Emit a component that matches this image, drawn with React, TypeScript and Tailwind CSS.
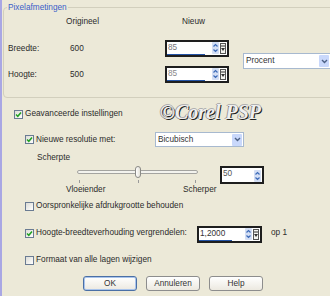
import React from "react";

function Check({ checked }: { checked?: boolean }) {
  return (
    <div className="flex h-[9px] w-[9px] shrink-0 items-center justify-center border border-[#6a7b92] bg-gradient-to-br from-[#dcdcd6] to-white">
      {checked && (
        <svg width="7" height="7" viewBox="0 0 7 7">
          <polyline points="1,3.5 2.8,5.3 6,1.5" fill="none" stroke="#21a121" strokeWidth="1.5" />
        </svg>
      )}
    </div>
  );
}

function Arrows() {
  return (
    <div className="flex h-[12px] w-[7px] shrink-0 items-center justify-center rounded-[1px] bg-[#d3def4]">
      <svg width="7" height="12" viewBox="0 0 7 12">
        <polyline points="1.5,4.5 3.5,2.5 5.5,4.5" fill="none" stroke="#3d6bb8" strokeWidth="1.2" />
        <polyline points="1.5,7.5 3.5,9.5 5.5,7.5" fill="none" stroke="#3d6bb8" strokeWidth="1.2" />
      </svg>
    </div>
  );
}

function Extra() {
  return (
    <div className="ml-[1px] flex h-[11px] w-[6px] shrink-0 items-center justify-center border border-[#555] bg-[#f4f4f0]">
      <svg width="4" height="8" viewBox="0 0 4 8">
        <line x1="0" y1="2" x2="4" y2="2" stroke="#333" strokeWidth="1" />
        <polygon points="0,4 4,4 2,7" fill="#333" />
      </svg>
    </div>
  );
}

function Spin({ value, color, cls, bar }: { value: string; color: string; cls: string; bar: string }) {
  return (
    <div className={"flex flex-col border-2 border-[#1e1e1e] bg-white " + cls}>
      <div className="flex flex-1 items-center pl-[1px] pr-[1px]">
        <span className={"flex-1 " + color}>{value}</span>
        <Arrows />
        <Extra />
      </div>
      <div className={"h-[2px] bg-[#2353a6] " + bar} />
    </div>
  );
}

function Dropdown({ text, cls }: { text: string; cls: string }) {
  return (
    <div className={"flex items-center border border-[#a7b9cf] bg-white pl-[2px] pr-[1px] " + cls}>
      <span className="flex-1 text-[#333]">{text}</span>
      <div className="flex h-[12px] w-[10px] items-center justify-center rounded-[1px] bg-[#c9d8fb]">
        <svg width="7" height="5" viewBox="0 0 7 5">
          <polyline points="1,1 3.5,3.5 6,1" fill="none" stroke="#4d6185" strokeWidth="1.4" />
        </svg>
      </div>
    </div>
  );
}

function Btn({ label, def }: { label: string; def?: boolean }) {
  return (
    <div
      className={
        "flex h-[15px] w-[54px] items-center justify-center rounded-[3px] border bg-gradient-to-b from-white to-[#ece9e0] text-[#333] " +
        (def ? "border-[#4a6fa5] shadow-[inset_0_0_0_1px_#a9c4ec]" : "border-[#8d8d8d]")
      }
    >
      {label}
    </div>
  );
}

export default function App() {
  return (
    <div className="relative h-[296px] w-[330px] overflow-hidden border-l-2 border-[#a9a7e4] bg-[#ece9d8] font-['Liberation_Sans',Arial,sans-serif] text-[8.25px] leading-[10px] text-[#2b2b2b]">
      {/* Group box */}
      <div className="relative ml-[1px] mt-[7px] h-[91px] w-[345px] rounded-[4px] border border-[#d2cfbd]">
        <span className="absolute left-[3px] top-[-6px] bg-[#ece9d8] px-[1px] leading-[11px] text-[#3a5ec8]">
          Pixelafmetingen
        </span>
        <div className="flex pl-[4px] pt-[8px]">
          <div className="flex w-[221px] flex-col">
            <div className="flex h-[12px] items-center">
              <span className="w-[58px]" />
              <span className="w-[99px]">Origineel</span>
              <span className="pl-[17px]">Nieuw</span>
            </div>
            <div className="mt-[12px] flex h-[17px] items-center">
              <span className="w-[58px]">Breedte:</span>
              <span className="w-[99px] pl-[4px]">600</span>
              <Spin value="85" color="text-[#777]" cls="h-[17px] w-[64px]" bar="w-[38px]" />
            </div>
            <div className="mt-[9px] flex h-[17px] items-center">
              <span className="w-[58px]">Hoogte:</span>
              <span className="w-[99px] pl-[4px]">500</span>
              <Spin value="85" color="text-[#888]" cls="h-[17px] w-[64px]" bar="w-[38px]" />
            </div>
          </div>
          <div className="ml-[14px] mt-[37px]">
            <Dropdown text="Procent" cls="h-[16px] w-[88px]" />
          </div>
        </div>
      </div>

      {/* Watermark */}
      <div className="absolute left-[158px] top-[100px] font-['Liberation_Serif',serif] text-[20px] font-bold italic leading-[24px] text-[#efefef] [text-shadow:1px_1px_0_#1e1e1e,-1px_0_0_#9a9a9a,0_-1px_0_#b0b0b0]">
        ©Corel PSP
      </div>

      {/* Advanced */}
      <div className="mt-[10px] flex h-[12px] items-center gap-[2px] pl-[12px]">
        <Check checked />
        <span>Geavanceerde instellingen</span>
      </div>

      <div className="mt-[12px] flex h-[15px] items-center pl-[23px]">
        <div className="flex w-[130px] items-center gap-[2px]">
          <Check checked />
          <span>Nieuwe resolutie met:</span>
        </div>
        <Dropdown text="Bicubisch" cls="h-[15px] w-[89px]" />
      </div>

      <div className="mt-[6px] flex h-[10px] items-center pl-[35px]">Scherpte</div>

      <div className="mt-[3px] flex h-[18px] pl-[75px]">
        <div className="flex w-[121px] flex-col">
          <div className="relative flex h-[12px] items-center">
            <div className="h-[4px] w-full rounded-full border border-[#a4a4a0] bg-[#f3f3ee]" />
            <div className="absolute left-[58px] top-0 h-[12px] w-[6px] rounded-[3px] border border-[#8a8a86] bg-gradient-to-r from-white to-[#e4e2d8]" />
          </div>
          <div className="mt-[2px] flex h-[3px] justify-between px-[2px]">
            <div className="w-px bg-[#9a9a9a]" />
            <div className="ml-[2px] w-px bg-[#9a9a9a]" />
            <div className="w-px bg-[#9a9a9a]" />
          </div>
        </div>
        <div className="ml-[22px] flex h-[18px] w-[44px] items-start border-2 border-[#1e1e1e] bg-white pl-[1px] pr-[1px] pt-[1px]">
          <span className="flex-1 leading-[10px] text-[#555]">50</span>
          <div className="mt-[1px]">
            <Arrows />
          </div>
        </div>
      </div>

      <div className="mt-[1px] flex h-[10px] items-center pl-[64px]">
        <span className="w-[117px]">Vloeiender</span>
        <span>Scherper</span>
      </div>

      <div className="mt-[5px] flex h-[12px] items-center gap-[2px] pl-[23px]">
        <Check />
        <span>Oorspronkelijke afdrukgrootte behouden</span>
      </div>

      <div className="mt-[14px] flex h-[17px] items-center pl-[23px]">
        <div className="mb-[3px] flex w-[172px] items-center gap-[2px]">
          <Check checked />
          <span>Hoogte-breedteverhouding vergrendelen:</span>
        </div>
        <Spin value="1,2000" color="text-[#333]" cls="h-[17px] w-[65px]" bar="w-[33px]" />
        <span className="mb-[3px] ml-[9px]">op 1</span>
      </div>

      <div className="mt-[11px] flex h-[12px] items-center gap-[2px] pl-[23px]">
        <Check />
        <span>Formaat van alle lagen wijzigen</span>
      </div>

      <div className="mt-[10px] flex gap-[9px] pl-[81px]">
        <Btn label="OK" def />
        <Btn label="Annuleren" />
        <Btn label="Help" />
      </div>
    </div>
  );
}
